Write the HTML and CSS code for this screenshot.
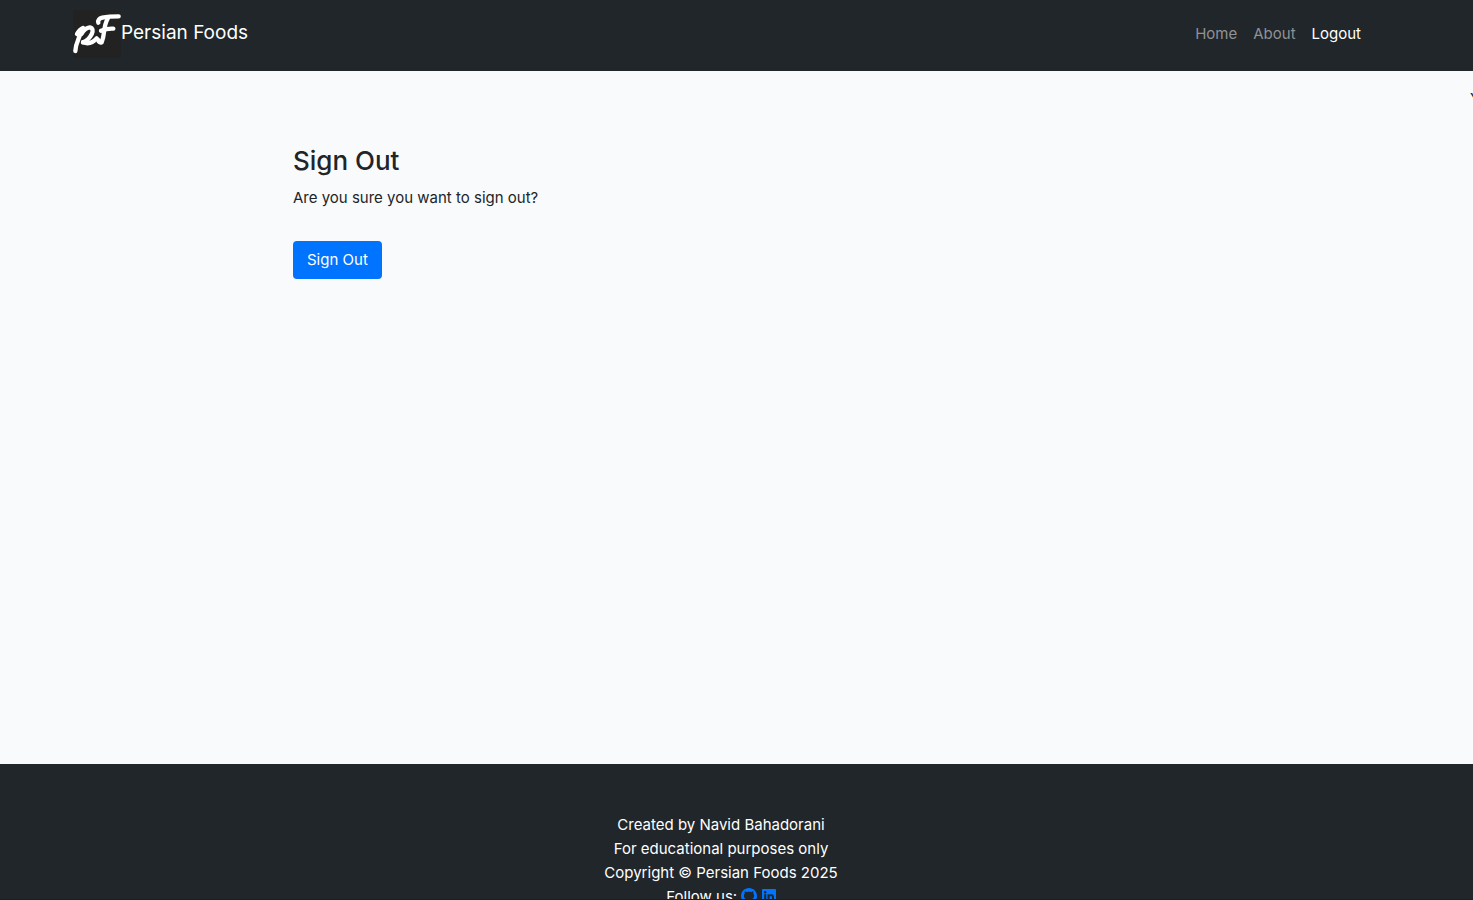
FILE: index.html
```html
<!DOCTYPE html>
<html lang="en">
<head>
<meta charset="utf-8">
<meta name="viewport" content="width=device-width, initial-scale=1">
<title>Persian Foods</title>
<link rel="stylesheet" href="styles.css">
</head>
<body>
<header class="navbar">
  <div class="container navbar-row">
    <a class="brand" href="#">
      <svg class="brand-logo" viewBox="21 18 144 144" aria-hidden="true">
        <rect class="logo-tile" x="21" y="18" width="144" height="144" rx="10"/>
        <g class="logo-stroke">
          <path d="M33 90 Q40 77 51 72 Q43 88 37 106 Q29 124 28 141"/>
          <path d="M46 90 Q58 71 71 70 Q85 73 77 91 Q67 110 51 115"/>
          <path d="M51 115 Q74 124 92 103"/>
          <path d="M158 37 Q128 37 109 41 Q94 45 97 56"/>
          <path d="M126 42 Q117 58 114 84 Q112 104 107 115 Q99 117 96 107"/>
          <path d="M105 80 Q124 73 142 74"/>
        </g>
      </svg>
      <span class="brand-name">Persian Foods</span>
    </a>
    <nav class="nav">
      <a class="nav-link" href="#">Home</a>
      <a class="nav-link" href="#">About</a>
      <a class="nav-link active" href="#">Logout</a>
    </nav>
  </div>
</header>
<main class="content">
  <div class="ticker"><span class="ticker-text">Y</span></div>
  <div class="container">
    <section class="panel">
      <h1 class="title">Sign Out</h1>
      <p class="question">Are you sure you want to sign out?</p>
      <form><button class="btn" type="button">Sign Out</button></form>
    </section>
  </div>
</main>
<footer class="footer">
  <p class="footer-line">Created by Navid Bahadorani</p>
  <p class="footer-line">For educational purposes only</p>
  <p class="footer-line">Copyright © Persian Foods 2025</p>
  <p class="footer-line social">Follow us:
    <a class="social-link" href="#" aria-label="GitHub"><svg class="icon" viewBox="0 0 16 16"><path d="M8 0C3.580 0 0 3.580 0 8c0 3.540 2.290 6.530 5.470 7.590.4.070.550-.170.550-.380 0-.190-.010-.820-.010-1.490-2.010.370-2.530-.490-2.690-.940-.090-.230-.480-.940-.820-1.130-.280-.150-.680-.520-.010-.530.630-.010 1.080.580 1.230.820.720 1.210 1.870.870 2.330.660.070-.520.280-.870.510-1.070-1.780-.2-3.640-.890-3.640-3.950 0-.870.310-1.590.820-2.150-.080-.2-.360-1.020.080-2.120 0 0 .670-.210 2.200.820.640-.180 1.320-.270 2-.270s1.360.090 2 .270c1.530-1.040 2.200-.820 2.200-.820.440 1.100.160 1.920.080 2.120.510.560.820 1.270.820 2.150 0 3.070-1.870 3.750-3.650 3.950.290.250.540.730.540 1.480 0 1.070-.010 1.930-.010 2.200 0 .210.150.460.550.380A8.010 8.010 0 0 0 16 8c0-4.420-3.580-8-8-8z"/></svg></a>
    <a class="social-link" href="#" aria-label="LinkedIn"><svg class="icon icon-linkedin" viewBox="0 0 448 512"><path d="M416 32H31.900C14.300 32 0 46.500 0 64.300v383.400C0 465.500 14.300 480 31.900 480H416c17.600 0 32-14.500 32-32.300V64.300c0-17.800-14.400-32.300-32-32.300zM135.400 416H69V202.200h66.500V416zM102.200 173a38.500 38.500 0 1 1 0-77 38.500 38.500 0 0 1 0 77zM384.300 416h-66.400V312c0-24.800-.5-56.700-34.500-56.700-34.600 0-39.900 27-39.900 54.900V416h-66.400V202.200h63.700v29.200h.9c8.900-16.800 30.600-34.500 62.900-34.500 67.200 0 79.700 44.300 79.700 101.900V416z"/></svg></a>
  </p>
</footer>
<div class="bottom-edge"></div>
</body>
</html>
```
FILE: styles.css
```css
* { box-sizing: border-box; }

body {
  margin: 0;
  height: 100vh;
  overflow: hidden;
  background: #f9fafc;
  color: #212529;
  font-family: Inter, "Liberation Sans", sans-serif;
  font-size: 15px;
  line-height: 24px;
}

a { text-decoration: none; }

.navbar,
.footer {
  padding-right: 31px;
  background: #20262a;
  color: #fff;
}

.container {
  width: 100%;
  max-width: 1320px;
  margin: 0 auto;
  padding: 0 12px;
}

.navbar-row {
  display: flex;
  justify-content: space-between;
  align-items: flex-start;
  padding-top: 10px;
  padding-bottom: 13px;
}

.brand { display: flex; color: #fff; }

.brand-logo { width: 48px; height: 48px; }

.logo-tile { fill: #222; }

.logo-stroke {
  fill: none;
  stroke: #fff;
  stroke-width: 13px;
  stroke-linecap: round;
  stroke-linejoin: round;
}

.brand-name { padding-top: 8px; font-size: 19px; line-height: 30px; }

.nav { display: flex; padding-top: 12px; }

.nav-link { padding: 0 8px; color: #909294; }

.nav-link.active { color: #fff; }

.content { position: relative; min-height: 77vh; padding: 73px 31px 0 0; }

.ticker {
  position: absolute;
  top: 16px;
  left: 0;
  width: 100%;
  overflow: hidden;
}

.ticker-text { display: block; margin-left: calc(100% - 3px); }

.panel { width: 66.6667%; margin: 0 auto; padding: 0 12px; }

/* The grid column supplies the gutter, so the outer one is dropped. */
.content .container { padding: 0; }

.title { margin: 0 0 8px; font-size: 26px; line-height: 34px; font-weight: 500; }

.question { margin: 0 0 31px; }

.btn {
  display: block;
  padding: 7px 14px;
  border: 0;
  border-radius: 4px;
  background: #0073ff;
  color: #fff;
  font: inherit;
}

.footer { padding-top: 49px; padding-bottom: 48px; text-align: center; }

.footer-line { margin: 0; }

.icon { width: 16px; height: 16px; fill: #0073ff; vertical-align: -2px; }

.icon-linkedin { width: 14px; }

.bottom-edge {
  position: fixed;
  bottom: 0;
  left: 0;
  width: 100%;
  height: 1px;
  background: #1f1c24;
}
```
